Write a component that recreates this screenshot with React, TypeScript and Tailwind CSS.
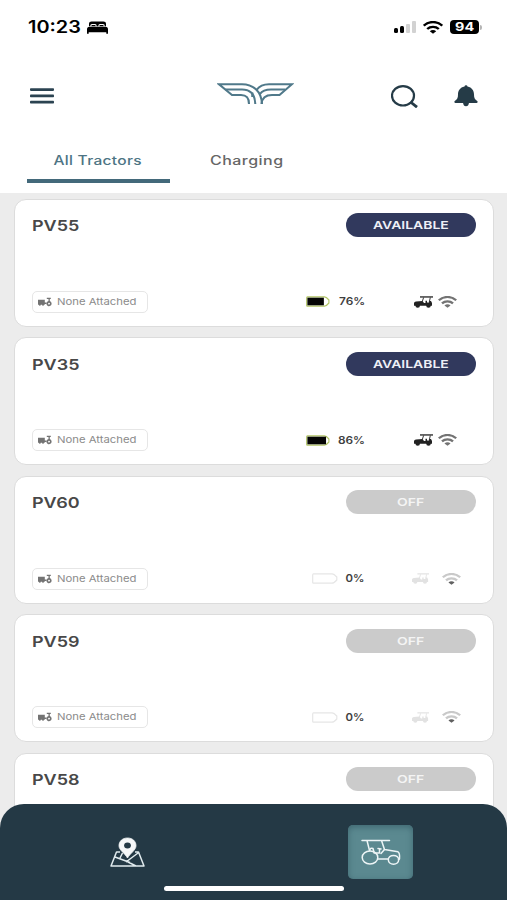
import React from 'react';
import clsx from 'clsx';

type Tractor = {
  name: string;
  available: boolean;
  charge: number;
};

const tractors: Tractor[] = [
  { name: 'PV55', available: true, charge: 76 },
  { name: 'PV35', available: true, charge: 86 },
  { name: 'PV60', available: false, charge: 0 },
  { name: 'PV59', available: false, charge: 0 },
  { name: 'PV58', available: false, charge: 0 },
];

const WifiIcon: React.FC<{ className?: string; dotClass?: string }> = ({ className, dotClass }) => (
  <svg viewBox="0 0 20 14" preserveAspectRatio="none" fill="none" stroke="currentColor" strokeWidth="2.5" className={className}>
    <path d="M.8 5C6-.2 14-.2 19.2 5" />
    <path d="M4.2 8.6c3.2-3 8.4-3 11.6 0" />
    <path d="M6.8 11c1.8-1.7 4.6-1.7 6.4 0L10 13.8z" fill="currentColor" stroke="none" className={dotClass} />
  </svg>
);

const StatusBar = () => (
  <div className="flex h-[54px] items-center pl-7 pr-[25px] text-black">
    <span className="w-[59px] whitespace-nowrap pt-px text-[17px] font-semibold leading-none">
      <span className="inline-block origin-left scale-x-[1.17]">10:23</span>
    </span>
    <svg viewBox="0 0 21 13" className="mt-px h-[13px] w-[21px]" fill="currentColor">
      <path d="M2 5.2V2.5Q2 .5 4.5 .5h12Q19 .5 19 2.5v2.700h-1.2Q17.8 3 16 3h-3q-1.7 0-1.7 2.2H9.7Q9.7 3 8 3H5Q3.2 3 3.2 5.2z" />
      <path d="M4.3 5.3q0-1.3 1-1.3h2.4q1 0 1 1.3zM12.3 5.3q0-1.3 1-1.3h2.4q1 0 1 1.3z" />
      <path d="M0 8.5Q0 5.8 2.5 5.8h16q2.5 0 2.5 2.7V12.7h-1.7V11.3H1.7v1.4H0z" />
    </svg>
    <div className="ml-auto flex items-center">
      <div className="flex h-3 items-end gap-[2px]">
        <i className="h-[5px] w-1 rounded-[1.5px] bg-black" />
        <i className="h-[7px] w-[4.5px] rounded-[1.5px] bg-black" />
        <i className="h-[9px] w-1 rounded-[1px] bg-[#d2d2d2]" />
        <i className="h-3 w-1 rounded-[1px] bg-[#d2d2d2]" />
      </div>
      <WifiIcon className="ml-[7px] h-[13px] w-[20px]" />
      <div className="ml-[7px] flex h-[14px] w-[29px] items-center justify-center rounded-[4px] bg-black pt-px text-[11.5px] font-bold leading-none text-white">
        <span className="scale-x-[1.25]">94</span>
      </div>
      <i className="ml-px h-[5px] w-[2px] rounded-r bg-[#b5b5b5]" />
    </div>
  </div>
);

const Header = () => (
  <header className="flex h-[84px] items-center pl-[29.5px] pr-[29px] text-[#253b47]">
    <svg viewBox="0 0 24 16" className="h-4 w-6" fill="#2b4351">
      <rect width="24" height="2.7" y=".2" rx=".8" />
      <rect width="24" height="2.7" y="6.5" rx=".8" />
      <rect width="24" height="2.7" y="12.8" rx=".8" />
    </svg>
    <svg viewBox="0 0 77 22" className="-mt-[5px] ml-[163.5px] h-[22px] w-[77px]" fill="none" stroke="#50798a" strokeWidth="2.1">
      <path d="M24 12H15L2 1.2H25C36 1.2 44.5 8 45 21" />
      <path d="M8.5 6.5H25c8.5 0 13 5.5 13.3 14.5" />
      <path d="M24 12c6 0 8 3 8 9M35.3 9.5V14" />
      <path d="M55 12h7.5L75 1.2H52C46 1.2 42 3.5 39.5 7" />
      <path d="M68 6.5H54c-5.5 0-9 1.5-11 4.5M55 12c-6 0-10 3-10.5 9" />
    </svg>
    <svg viewBox="0 0 27 23" className="ml-[96.500px] h-[23px] w-[27px]" fill="none" stroke="currentColor">
      <ellipse cx="12" cy="10.8" rx="11" ry="9.7" strokeWidth="2.2" />
      <path d="M19.5 17L26 22.2" strokeWidth="2.8" />
    </svg>
    <svg viewBox="0 0 24 22" className="ml-auto h-[22px] w-6" fill="currentColor">
      <path d="M10.5 1.5Q10.7.2 12 .2t1.5 1.3C18 2.5 20 5.5 20 9.5c0 3.500.8 5 3.2 6.5q1.2 1.5-.5 2H1.300q-1.700-.5-.5-2C3.2 14.5 4 13 4 9.5 4 5.5 6 2.5 10.5 1.5zM9 17.800h6q-.5 3.500-3 3.500t-3-3.500z" />
    </svg>
  </header>
);

const Tabs = () => (
  <nav className="flex h-[55px] px-[27px] pt-[12px] text-[12.5px] font-medium leading-[20px]">
    <div className="flex h-[32.5px] w-[143px] justify-center border-b-4 border-[#43697a] pt-px text-[#4d7484]">
      <span className="-ml-[2px] scale-x-[1.24] whitespace-nowrap tracking-[0.02em]">All Tractors</span>
    </div>
    <div className="flex w-[154px] justify-center pt-px text-[#666]">
      <span className="scale-x-[1.28] tracking-[0.03em]">Charging</span>
    </div>
  </nav>
);

const Battery: React.FC<{ charge: number }> = ({ charge }) => (
  <svg viewBox="0 0 26 11" className={clsx('h-[11px]', charge ? 'w-[24px]' : 'w-[26px]')} preserveAspectRatio="none" fill="none">
    <path d="M1.5.8H20Q22 .8 24.8 4v3Q22 10.2 20 10.2H1.500Q.7 10.2.7 9V2Q.7.8 1.5.8z" stroke={charge ? '#b2c565' : '#e6e6e6'} strokeWidth="1.2" />
    {charge > 0 && <rect x="1.5" y="1.7" width={charge * 0.235} height="7.6" fill="#050505" />}
  </svg>
);

const CartIcon: React.FC<{ className?: string }> = ({ className }) => (
  <svg viewBox="0 0 19 12" className={className} preserveAspectRatio="none" fill="currentColor">
    <path d="M6 .3h13v1.3H6z" />
    <path d="M8.3 5.5L9.6 1.5M16.3 1.5L15.3 6" fill="none" stroke="currentColor" strokeWidth=".9" />
    <path d="M0 9V7Q.3 5.8 2 5.5L8.5 5l1.5 2h1.5V4.8h1.5V6.5h2l.5-1.5h1.5L18 7v2.800H0z" />
    <circle cx="3.7" cy="9.5" r="2.3" />
    <circle cx="14.5" cy="9.5" r="2.3" />
  </svg>
);

const AttachmentChip = () => (
  <div className="flex h-[22px] w-[116.5px] items-center rounded-[5px] border border-[#e6e6e6] pl-[5px] text-[#8b8b8b]">
    <svg viewBox="0 0 14 10" className="mr-[5.5px] h-[10px] w-[14px] shrink-0" fill="#737373">
      <path d="M0 2.8h6.8V5.500H8.500v1.500H6.800v.8H0z" />
      <circle cx="1.8" cy="7.8" r="1" />
      <circle cx="5" cy="7.8" r="1" />
      <path d="M8.8 .8h4v1.2h-1V4q1.8.8 1.8 2.600A2.600 2.600 0 1 1 9.5 4.5L10.5 4V2H8.800zM11 5.700a.9.9 0 1 0 .1 1.800a.9.9 0 0 0-.1-1.800z" />
    </svg>
    <span className="origin-left scale-x-[1.19] whitespace-nowrap text-[9.5px] leading-none">None Attached</span>
  </div>
);

const TractorCard: React.FC<{ tractor: Tractor }> = ({ tractor }) => {
  const { name, available, charge } = tractor;

  return (
    <article className="flex h-[128px] shrink-0 flex-col justify-between rounded-[12px] border-[1.5px] border-[#dcdcdc] bg-white pb-[13px] pl-[17px] pr-[17px] pt-[13.5px]">
      <div className="flex h-6 items-center justify-between">
        <h2 className="origin-left scale-x-[1.2] pt-px text-[15px] font-semibold leading-none text-[#484848]">{name}</h2>
        <div
          className={clsx(
            'flex h-6 w-[130px] items-center justify-center rounded-full pt-px text-[11px] font-semibold leading-none',
            available ? 'bg-[#31395d] text-[#eef0f7]' : 'bg-[#cbcbcb] text-[#f4f4f4]'
          )}
        >
          <span className="scale-x-[1.27]">{available ? 'AVAILABLE' : 'OFF'}</span>
        </div>
      </div>

      <div className="flex items-center">
        <AttachmentChip />
        <div className={clsx('flex items-center justify-between', available ? 'ml-[157.5px] w-[59.5px]' : 'ml-[163.5px] w-[53px]')}>
          <Battery charge={charge} />
          <span
            className={clsx(
              'origin-right pt-[2px] text-[10.5px] font-semibold leading-none text-[#3f3f3f]',
              available ? 'scale-x-[1.13]' : 'scale-x-[1.08]'
            )}
          >
            {charge}%
          </span>
        </div>
        {available ? (
          <div className="ml-[49px] flex items-center gap-[5px]">
            <CartIcon className="h-3 w-[19px] text-[#222]" />
            <WifiIcon className="h-3 w-[19px] text-[#737373]" />
          </div>
        ) : (
          <div className="ml-[47px] flex items-center gap-[13px]">
            <CartIcon className="h-[11px] w-[17px] text-[#e2e2e2]" />
            <WifiIcon className="h-3 w-[19px] text-[#c9c9c9]" dotClass="text-[#606060]" />
          </div>
        )}
      </div>
    </article>
  );
};

const BottomNav = () => (
  <footer className="absolute inset-x-0 bottom-0 flex h-24 flex-col rounded-t-[24px] bg-[#243945]">
    <div className="flex h-[82px] items-start justify-between pl-[110px] pr-[94px] pt-[21px]">
      <svg viewBox="0 0 35 30" className="mt-[12px] h-[30px] w-[35px]" fill="none" stroke="#e1ebee" strokeWidth="1.5" strokeLinejoin="round">
        <path d="M10 15H6.5L1 29H34L28.5 15H25M5 20L20 25.5M10 21l2.5-5M16 25L28 16M18 25L26 29" />
        <path d="M17.5 21C15 16.5 9 13 9 8.8C9 4 12.7 1 17.5 1S26 4 26 8.8C26 13 20 16.5 17.5 21z" fill="#f5f7f8" stroke="#f5f7f8" strokeWidth=".8" />
        <ellipse cx="17.5" cy="8.5" rx="3.4" ry="3" fill="#243945" stroke="none" />
      </svg>
      <div className="flex h-[54px] w-[65px] items-center justify-center rounded-[5px] bg-[#5b8990] shadow-[inset_0_2px_6px_#3f6771]">
        <svg viewBox="0 0 40 26" className="h-[26px] w-10" fill="none" stroke="#edf5f6" strokeWidth="1.5" strokeLinejoin="round" strokeLinecap="round">
          <path d="M1 1.5H28.5M6 1.5L8.5 11.5M20.5 1.5L23.5 10.5L37 12.8Q39 13.8 38.5 20L37.500 20.500" />
          <path d="M9 11q0-2.500 3-1.500l1.200 4.500h5.300V11M17 9.500l3 .5M20 14.500l3.500-4M17 20H27" />
          <ellipse cx="9" cy="18.5" rx="7.8" ry="6.5" />
          <ellipse cx="32.5" cy="20.8" rx="5.2" ry="4.4" />
        </svg>
      </div>
    </div>
    <div className="ml-[164px] h-[5px] w-[180px] rounded-full bg-white" />
  </footer>
);

export default function App() {
  return (
    <div className="relative flex h-[900px] w-[507px] flex-col overflow-hidden bg-white font-['Inter','Liberation_Sans',sans-serif]">
      <StatusBar />
      <Header />
      <Tabs />
      <main className="flex flex-1 flex-col gap-[10.5px] overflow-hidden bg-[#ececec] pl-[13.5px] pr-[13px] pt-[5.5px]">
        {tractors.map((tractor) => (
          <TractorCard key={tractor.name} tractor={tractor} />
        ))}
      </main>
      <BottomNav />
    </div>
  );
}
